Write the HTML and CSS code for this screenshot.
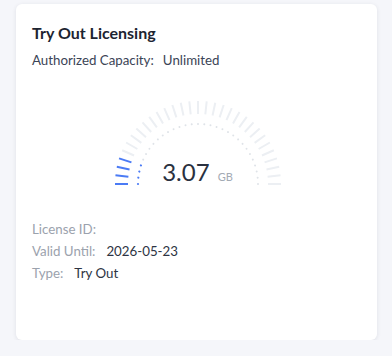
FILE: index.html
```html
<!DOCTYPE html>
<html>
<head>
<meta charset="utf-8">
<link rel="stylesheet" href="styles.css">
</head>
<body>
<div class="card">
  <h2 class="title">Try Out Licensing</h2>
  <div class="capacity"><span class="cap-label">Authorized Capacity:</span><span class="cap-value">Unlimited</span></div>
  <div class="gauge">
    <svg class="gauge-svg" width="172" height="90" viewBox="0 0 172 90">
      <g transform="translate(86,86)" stroke-linecap="butt">
        <g class="ticks" stroke-width="2">
          <line class="on" x1="-83" y1="0" x2="-70" y2="0" transform="rotate(0)"/>
          <line class="on" x1="-83" y1="0" x2="-70" y2="0" transform="rotate(6)"/>
          <line class="on" x1="-83" y1="0" x2="-70" y2="0" transform="rotate(12)"/>
          <line class="on" x1="-83" y1="0" x2="-70" y2="0" transform="rotate(18)"/>
          <line x1="-83" y1="0" x2="-70" y2="0" transform="rotate(24)"/>
          <line x1="-83" y1="0" x2="-70" y2="0" transform="rotate(30)"/>
          <line x1="-83" y1="0" x2="-70" y2="0" transform="rotate(36)"/>
          <line x1="-83" y1="0" x2="-70" y2="0" transform="rotate(42)"/>
          <line x1="-83" y1="0" x2="-70" y2="0" transform="rotate(48)"/>
          <line x1="-83" y1="0" x2="-70" y2="0" transform="rotate(54)"/>
          <line x1="-83" y1="0" x2="-70" y2="0" transform="rotate(60)"/>
          <line x1="-83" y1="0" x2="-70" y2="0" transform="rotate(66)"/>
          <line x1="-83" y1="0" x2="-70" y2="0" transform="rotate(72)"/>
          <line x1="-83" y1="0" x2="-70" y2="0" transform="rotate(78)"/>
          <line x1="-83" y1="0" x2="-70" y2="0" transform="rotate(84)"/>
          <line x1="-83" y1="0" x2="-70" y2="0" transform="rotate(90)"/>
          <line x1="-83" y1="0" x2="-70" y2="0" transform="rotate(96)"/>
          <line x1="-83" y1="0" x2="-70" y2="0" transform="rotate(102)"/>
          <line x1="-83" y1="0" x2="-70" y2="0" transform="rotate(108)"/>
          <line x1="-83" y1="0" x2="-70" y2="0" transform="rotate(114)"/>
          <line x1="-83" y1="0" x2="-70" y2="0" transform="rotate(120)"/>
          <line x1="-83" y1="0" x2="-70" y2="0" transform="rotate(126)"/>
          <line x1="-83" y1="0" x2="-70" y2="0" transform="rotate(132)"/>
          <line x1="-83" y1="0" x2="-70" y2="0" transform="rotate(138)"/>
          <line x1="-83" y1="0" x2="-70" y2="0" transform="rotate(144)"/>
          <line x1="-83" y1="0" x2="-70" y2="0" transform="rotate(150)"/>
          <line x1="-83" y1="0" x2="-70" y2="0" transform="rotate(156)"/>
          <line x1="-83" y1="0" x2="-70" y2="0" transform="rotate(162)"/>
          <line x1="-83" y1="0" x2="-70" y2="0" transform="rotate(168)"/>
          <line x1="-83" y1="0" x2="-70" y2="0" transform="rotate(174)"/>
          <line x1="-83" y1="0" x2="-70" y2="0" transform="rotate(180)"/>
        </g>
        <g class="dots">
          <circle class="on" cx="-60" cy="0" r="1.1" transform="rotate(0)"/>
          <circle class="on" cx="-60" cy="0" r="1.1" transform="rotate(6)"/>
          <circle class="on" cx="-60" cy="0" r="1.1" transform="rotate(12)"/>
          <circle class="on" cx="-60" cy="0" r="1.1" transform="rotate(18)"/>
          <circle cx="-60" cy="0" r="1" transform="rotate(24)"/>
          <circle cx="-60" cy="0" r="1" transform="rotate(30)"/>
          <circle cx="-60" cy="0" r="1" transform="rotate(36)"/>
          <circle cx="-60" cy="0" r="1" transform="rotate(42)"/>
          <circle cx="-60" cy="0" r="1" transform="rotate(48)"/>
          <circle cx="-60" cy="0" r="1" transform="rotate(54)"/>
          <circle cx="-60" cy="0" r="1" transform="rotate(60)"/>
          <circle cx="-60" cy="0" r="1" transform="rotate(66)"/>
          <circle cx="-60" cy="0" r="1" transform="rotate(72)"/>
          <circle cx="-60" cy="0" r="1" transform="rotate(78)"/>
          <circle cx="-60" cy="0" r="1" transform="rotate(84)"/>
          <circle cx="-60" cy="0" r="1" transform="rotate(90)"/>
          <circle cx="-60" cy="0" r="1" transform="rotate(96)"/>
          <circle cx="-60" cy="0" r="1" transform="rotate(102)"/>
          <circle cx="-60" cy="0" r="1" transform="rotate(108)"/>
          <circle cx="-60" cy="0" r="1" transform="rotate(114)"/>
          <circle cx="-60" cy="0" r="1" transform="rotate(120)"/>
          <circle cx="-60" cy="0" r="1" transform="rotate(126)"/>
          <circle cx="-60" cy="0" r="1" transform="rotate(132)"/>
          <circle cx="-60" cy="0" r="1" transform="rotate(138)"/>
          <circle cx="-60" cy="0" r="1" transform="rotate(144)"/>
          <circle cx="-60" cy="0" r="1" transform="rotate(150)"/>
          <circle cx="-60" cy="0" r="1" transform="rotate(156)"/>
          <circle cx="-60" cy="0" r="1" transform="rotate(162)"/>
          <circle cx="-60" cy="0" r="1" transform="rotate(168)"/>
          <circle cx="-60" cy="0" r="1" transform="rotate(174)"/>
          <circle cx="-60" cy="0" r="1" transform="rotate(180)"/>
        </g>
      </g>
    </svg>
    <div class="reading"><span class="num">3.07</span><span class="unit">GB</span></div>
  </div>
  <div class="rows">
    <div class="row"><span class="label">License ID:</span><span class="value"></span></div>
    <div class="row"><span class="label">Valid Until:</span><span class="value">2026-05-23</span></div>
    <div class="row"><span class="label">Type:</span><span class="value">Try Out</span></div>
  </div>
</div>
</body>
</html>
```

FILE: styles.css
```css
html, body {
  margin: 0;
  background: #f5f6fa;
}
body {
  padding: 4px 15px 0 16px;
  font-family: Lato, "Noto Sans", sans-serif;
}
.card {
  background: #ffffff;
  border-radius: 6px;
  box-shadow: 0 1px 4px rgba(30, 40, 60, 0.10);
  height: 336px;
  box-sizing: border-box;
  padding: 18px 16px 16px 16px;
}
.title {
  margin: 0;
  font-size: 16px;
  line-height: 22px;
  font-weight: 700;
  color: #1d2431;
}
.capacity {
  margin-top: 6px;
  font-size: 13.3px;
  line-height: 20px;
  color: #3b4456;
  display: flex;
  gap: 9px;
}
.gauge {
  position: relative;
  width: 172px;
  height: 90px;
  margin: 28px auto 0;
  left: 1px;
}
.gauge-svg {
  display: block;
}
.ticks line {
  stroke: #eceff3;
}
.ticks line.on {
  stroke: #4b7bf5;
}
.dots circle {
  fill: #dfe3e8;
}
.dots circle.on {
  fill: #4b7bf5;
}
.reading {
  position: absolute;
  left: 0;
  right: 0;
  top: 59px;
  display: flex;
  justify-content: center;
  align-items: baseline;
  gap: 8px;
  color: #2a3140;
}
.num {
  font-size: 24px;
  line-height: 30px;
}
.unit {
  font-size: 11px;
  color: #a3aab4;
}
.rows {
  margin-top: 30px;
  font-size: 13.3px;
  line-height: 22px;
}
.row {
  display: flex;
  gap: 11px;
}
.label {
  color: #9ba2ad;
}
.value {
  color: #2d3443;
}
```
